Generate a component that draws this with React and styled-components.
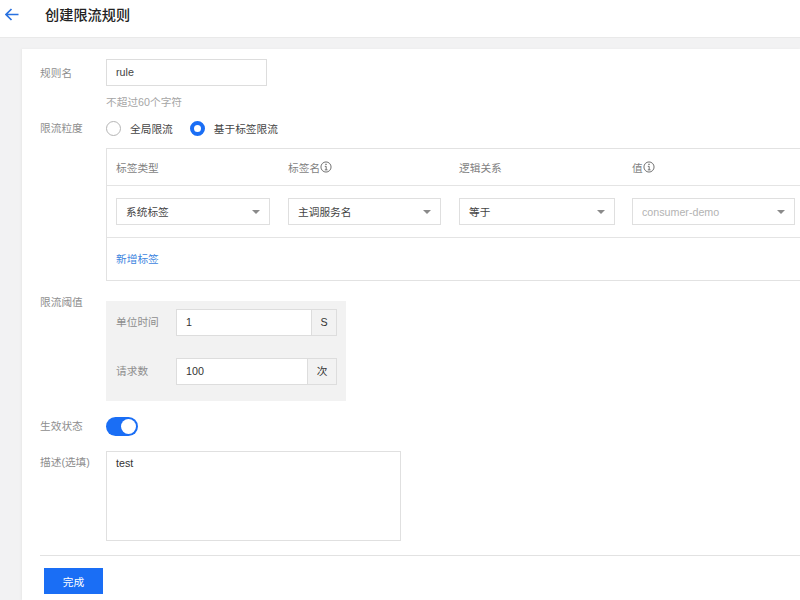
import React from "react";
import styled, { createGlobalStyle } from "styled-components";

const GlobalStyle = createGlobalStyle`
  html, body {
    margin: 0;
    padding: 0;
    height: 600px;
    overflow: hidden;
    background-color: #f2f2f3;
    font-family: "Liberation Sans", "Noto Sans CJK SC", sans-serif;
    font-size: 10.7px;
    color: #333333;
  }
  * {
    box-sizing: border-box;
  }
`;

const Topbar = styled.div`
  height: 38px;
  display: flex;
  align-items: center;
  padding-bottom: 9px;
  background-color: #ffffff;
  border-bottom: 1px solid #e9e9e9;
`;
const GoBackward = styled.div`
  width: 45px;
  padding-left: 5px;
  height: 15px;
  color: #2a72e0;
`;
const TopbarTitle = styled.div`
  font-size: 14.2px;
  font-weight: 500;
  color: #222222;
`;
const Card = styled.div`
  width: 778px;
  height: 551px;
  margin: 11px 0 0 22px;
  padding: 10px 0 0 18px;
  background-color: #ffffff;
  box-shadow: -1px 0 2px #e8e8e8;
  overflow: hidden;
`;
const Row = styled.div`
  display: flex;
  align-items: ${(props) => props.$align || "flex-start"};
  margin-top: ${(props) => props.$top || 0}px;
`;
const Label = styled.div`
  width: 66px;
  flex-shrink: 0;
  margin-top: ${(props) => props.$shift || 0}px;
  line-height: 16px;
  color: #8e8e8e;
`;
const TextInput = styled.div`
  width: 161px;
  height: 27px;
  padding: 0 0 2px 9px;
  display: flex;
  align-items: center;
  background-color: #ffffff;
  border: 1px solid #dddddd;
  color: #444444;
`;
const Help = styled.div`
  margin: 8px 0 0 66px;
  line-height: 16px;
  color: #a6a6a6;
`;
const RadioGroup = styled.div`
  display: flex;
  align-items: center;
`;
const Radio = styled.span`
  width: 15px;
  height: 15px;
  border-radius: 50%;
  margin-right: 9px;
  background-color: #ffffff;
  border: ${(props) =>
    props.$on ? "4px solid #1a6ef5" : "1px solid #b5b5b5"};
`;
const RadioText = styled.span`
  margin-right: 17px;
  color: #444444;
`;
const TagTable = styled.div`
  width: 720px;
  flex-shrink: 0;
  height: 133px;
  background-color: #ffffff;
  border: 1px solid #e2e2e2;
`;
const TagRow = styled.div`
  height: ${(props) => props.$h}px;
  display: grid;
  grid-template-columns: 172px 171px 173px 1fr;
  align-items: center;
  border-bottom: 1px solid #e4e4e4;
`;
const HeadCell = styled.div`
  display: flex;
  align-items: center;
  padding-left: 9px;
  color: #7f7f7f;
`;
const Select = styled.div`
  width: ${(props) => props.$w}px;
  height: 27px;
  margin-left: 9px;
  padding: 0 9px 0 9px;
  display: flex;
  align-items: center;
  justify-content: space-between;
  border: 1px solid #dfdfdf;
  color: ${(props) => (props.$muted ? "#b3b3b3" : "#444444")};
`;
const Caret = styled.span`
  width: 0;
  height: 0;
  border-left: 4px solid transparent;
  border-right: 4px solid transparent;
  border-top: 4.5px solid #8a8a8a;
`;
const AddLink = styled.a`
  display: block;
  margin: 13px 0 0 9px;
  line-height: 16px;
  color: #3d85e0;
`;
const ThresholdBox = styled.div`
  width: 240px;
  height: 100px;
  padding: 8px 9px 0 10px;
  background-color: #f2f2f2;
`;
const ThresholdRow = styled.div`
  display: flex;
  align-items: center;
  height: 27px;
  margin-bottom: 22px;
`;
const ThresholdLabel = styled.div`
  width: 60px;
  padding-bottom: 2px;
  color: #8e8e8e;
`;
const ThresholdInput = styled.div`
  flex: 1;
  height: 27px;
  padding: 0 0 2px 9px;
  display: flex;
  align-items: center;
  background-color: #ffffff;
  border: 1px solid #dddddd;
  border-right: none;
  color: #333333;
`;
const Unit = styled.div`
  width: ${(props) => props.$w}px;
  height: 27px;
  padding-bottom: 2px;
  display: flex;
  align-items: center;
  justify-content: center;
  background-color: #f2f2f2;
  border: 1px solid #dddddd;
  color: #333333;
`;
const Toggle = styled.div`
  width: 32px;
  height: 19px;
  padding: 2px;
  display: flex;
  justify-content: flex-end;
  border-radius: 10px;
  background-color: #1a6ef5;
`;
const Knob = styled.span`
  width: 15px;
  height: 15px;
  border-radius: 50%;
  background-color: #ffffff;
`;
const TextArea = styled.div`
  width: 295px;
  height: 90px;
  padding: 4px 9px;
  line-height: 14px;
  border: 1px solid #e0e0e0;
  color: #333333;
`;
const Divider = styled.div`
  height: 1px;
  margin-top: 14px;
  background-color: #e2e2e2;
`;
const DoneBtn = styled.button`
  display: block;
  width: 59px;
  height: 26px;
  margin: 12px 0 0 4px;
  padding: 0;
  border: none;
  background-color: #1a6ef5;
  color: #ffffff;
  font-family: inherit;
  font-size: 10.7px;
`;

const BackArrow = () => (
  <svg width="14" height="15" viewBox="0 0 14 15" fill="none" stroke="currentColor" strokeWidth="1.7">
    <path d="M1 7.5H13.5M6.5 2L1 7.5L6.5 13" />
  </svg>
);

const InfoIcon = () => (
  <svg width="12" height="12" viewBox="0 0 13 13" fill="none" stroke="#666666">
    <circle cx="6.5" cy="6.5" r="5.5" />
    <path d="M5.2 5.8H6.7V9.6M5.2 9.6H8.2" />
    <path d="M6.5 3V4.4" strokeWidth="1.4" />
  </svg>
);

const App = () => {
  return (
    <>
      <GlobalStyle />
      <Topbar>
        <GoBackward>
          <BackArrow />
        </GoBackward>
        <TopbarTitle>创建限流规则</TopbarTitle>
      </Topbar>
      <Card>
        <Row $align="center">
          <Label>规则名</Label>
          <TextInput>rule</TextInput>
        </Row>
        <Help>不超过60个字符</Help>
        <Row $align="center" $top={10}>
          <Label>限流粒度</Label>
          <RadioGroup>
            <Radio />
            <RadioText>全局限流</RadioText>
            <Radio $on />
            <RadioText>基于标签限流</RadioText>
          </RadioGroup>
        </Row>
        <Row $top={12}>
          <Label />
          <TagTable>
            <TagRow $h={37}>
              <HeadCell>标签类型</HeadCell>
              <HeadCell>
                标签名
                <InfoIcon />
              </HeadCell>
              <HeadCell>逻辑关系</HeadCell>
              <HeadCell>
                值
                <InfoIcon />
              </HeadCell>
            </TagRow>
            <TagRow $h={52}>
              <Select $w={154}>
                系统标签
                <Caret />
              </Select>
              <Select $w={153}>
                主调服务名
                <Caret />
              </Select>
              <Select $w={156}>
                等于
                <Caret />
              </Select>
              <Select $w={163} $muted>
                consumer-demo
                <Caret />
              </Select>
            </TagRow>
            <AddLink>新增标签</AddLink>
          </TagTable>
        </Row>
        <Row $top={20}>
          <Label $shift={-7}>限流阈值</Label>
          <ThresholdBox>
            <ThresholdRow>
              <ThresholdLabel>单位时间</ThresholdLabel>
              <ThresholdInput>1</ThresholdInput>
              <Unit $w={26}>S</Unit>
            </ThresholdRow>
            <ThresholdRow>
              <ThresholdLabel>请求数</ThresholdLabel>
              <ThresholdInput>100</ThresholdInput>
              <Unit $w={30}>次</Unit>
            </ThresholdRow>
          </ThresholdBox>
        </Row>
        <Row $align="center" $top={16}>
          <Label $shift={-2}>生效状态</Label>
          <Toggle>
            <Knob />
          </Toggle>
        </Row>
        <Row $top={15}>
          <Label $shift={3}>描述(选填)</Label>
          <TextArea>test</TextArea>
        </Row>
        <Divider />
        <DoneBtn>完成</DoneBtn>
      </Card>
    </>
  );
};

export default App;
